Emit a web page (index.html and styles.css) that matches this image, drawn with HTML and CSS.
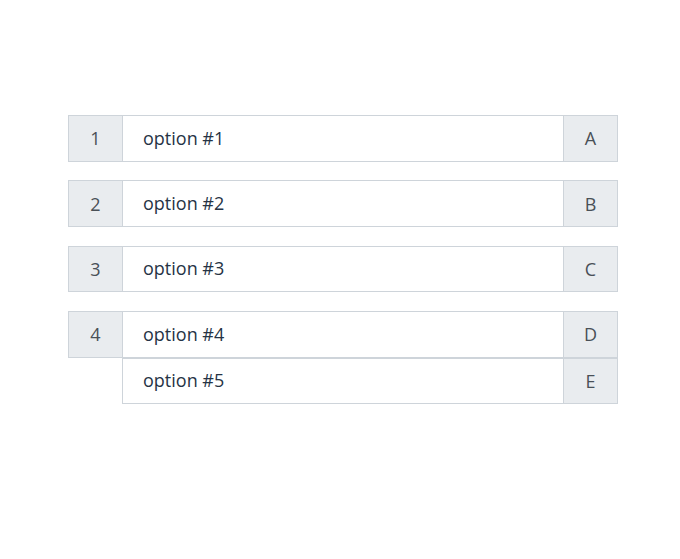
FILE: index.html
```html
<!DOCTYPE html>
<html>
<head>
<meta charset="utf-8">
<link rel="stylesheet" href="styles.css">
</head>
<body>
<div class="list">
  <div class="row">
    <div class="addon left">1</div>
    <div class="inputs"><div class="input">option #1</div></div>
    <div class="addons"><div class="addon right">A</div></div>
  </div>
  <div class="row">
    <div class="addon left">2</div>
    <div class="inputs"><div class="input">option #2</div></div>
    <div class="addons"><div class="addon right">B</div></div>
  </div>
  <div class="row">
    <div class="addon left">3</div>
    <div class="inputs"><div class="input">option #3</div></div>
    <div class="addons"><div class="addon right">C</div></div>
  </div>
  <div class="row">
    <div class="addon left">4</div>
    <div class="inputs"><div class="input">option #4</div><div class="input">option #5</div></div>
    <div class="addons"><div class="addon right">D</div><div class="addon right">E</div></div>
  </div>
</div>
</body>
</html>
```
FILE: styles.css
```css
html, body {
  margin: 0;
  padding: 0;
  background: #fff;
}
body {
  font-family: "Open Sans", "Noto Sans", sans-serif;
  font-size: 18px;
}
.list {
  padding: 115px 62px 0 68px;
  display: flex;
  flex-direction: column;
  gap: 18.67px;
}
.row {
  display: flex;
  align-items: flex-start;
}
.addon {
  height: 46.67px;
  box-sizing: border-box;
  background: #e9ecef;
  border: 1px solid #ced4da;
  color: #495057;
  display: flex;
  align-items: center;
  justify-content: center;
}
.left {
  width: 55px;
  flex: none;
}
.inputs {
  flex: 1;
  display: flex;
  flex-direction: column;
  margin-left: -1px;
}
.input {
  height: 46.67px;
  box-sizing: border-box;
  border: 1px solid #ced4da;
  padding-left: 20px;
  padding-bottom: 1px;
  display: flex;
  align-items: center;
  color: #263345;
}
.addons {
  width: 55px;
  flex: none;
  margin-left: -1px;
  display: flex;
  flex-direction: column;
}
```
